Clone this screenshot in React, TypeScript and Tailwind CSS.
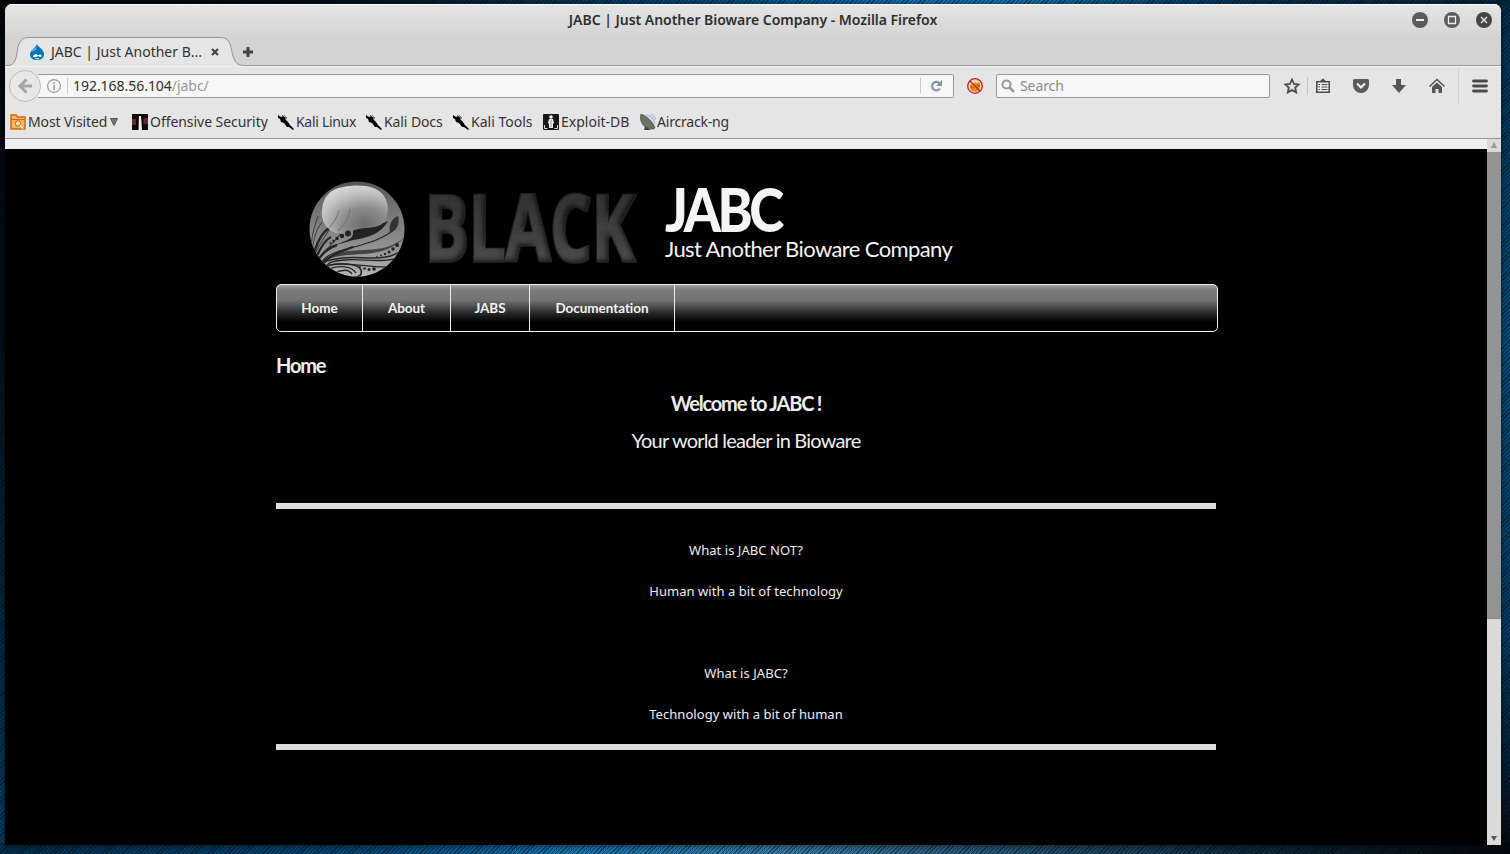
import React from "react";

function Kali() {
  return (
    <svg width="16" height="16" viewBox="0 0 16 16" className="shrink-0">
      <path d="M0 1l3 2 2-1 3 2-1 1 3 3 2 3 4 4-1 1-4-3-2 0-3-4-3-1-1-3-2-1z" fill="#000" />
      <path d="M4 1l5 4M6 1l3 3" stroke="#555" strokeWidth=".7" />
    </svg>
  );
}

function Orb() {
  return (
    <svg width="98" height="98" viewBox="0 0 98 98" className="block">
      <defs>
        <linearGradient id="ball" x1="0" y1="0" x2="0" y2="1">
          <stop offset="0" stopColor="#555" />
          <stop offset=".3" stopColor="#757575" />
          <stop offset=".65" stopColor="#8d8d8d" />
          <stop offset="1" stopColor="#b5b5b5" />
        </linearGradient>
        <radialGradient id="gloss" cx=".65" cy=".8" r=".85">
          <stop offset="0" stopColor="#6c6c6c" />
          <stop offset=".4" stopColor="#8c8c8c" />
          <stop offset=".75" stopColor="#c0c0c0" />
          <stop offset="1" stopColor="#d8d8d8" />
        </radialGradient>
        <clipPath id="disc"><circle cx="48" cy="48" r="47.500" /></clipPath>
      </defs>
      <circle cx="48" cy="48" r="47.500" fill="url(#ball)" />
      <g clipPath="url(#disc)" fill="none" stroke="#242424">
        <path d="M44 47C56 48 69 45 79 40C72 53 58 57 44 59L24 65C36 60 44 58 44 53Z" fill="#222" stroke="none" />
        <path d="M81 52c-2-8 2-15 8-17 2 7-1 15-8 17z" fill="#333" stroke="none" />
        <path d="M82 51C68 61 48 65 34 69S17 76 13 80" strokeWidth="1.200" />
        <path d="M96 56C76 74 50 66 30 72S14 79 11 83C25 73 40 74 55 73S85 68 96 56Z" fill="#444" stroke="none" />
        <path d="M94 68C78 83 52 74 33 77S18 80 13 84" strokeWidth="1.500" />
        <path d="M90 76C75 83 52 77 35 79S21 82 16 86" strokeWidth="1.300" />
        <path d="M82 85C68 89 44 80 20 84" strokeWidth="1.200" />
        <path d="M16 86C30 80 50 83 52 89S48 96 44 97" strokeWidth="1.600" />
        <path d="M20 88C30 84 43 85 47 92M26 92c8-4 14-3 17 1" strokeWidth="1.300" />
        <path d="M2 68C2 54 6 44 9 35M3 73C4 57 8 47 13 41M5 77C8 63 22 51 29 30M9 79C16 66 37 57 41 28" strokeWidth="1.100" stroke="#444" />
        <path d="M4 76C8 60 14 51 20 47M6 79C12 65 17 58 22 56M8 81C14 70 22 66 28 64" strokeWidth="2.400" />
        <path d="M12 84C20 74 31 71 44 66" strokeWidth="2.200" />
      </g>
      <path d="M34 6C50 3 67 4 75 15C81 24 80 37 73 43C66 48 54 46 46 49C38 53 28 55 21 49C15 44 12 37 13 29C14 16 21 8 34 6Z" fill="url(#gloss)" />
      <g fill="none" stroke="#707070" strokeWidth="1"><path d="M30 29C28 37 24 42 20 47M41 28C40 38 34 45 29 50" /></g>
      <g fill="#222">
        <circle cx="39" cy="52.500" r="3" /><circle cx="33" cy="55" r="2.200" /><circle cx="28" cy="57.500" r="1.700" /><circle cx="24.500" cy="60" r="1.300" /><circle cx="21.500" cy="62" r="1" />
        <circle cx="88" cy="64" r="2" /><circle cx="84" cy="68" r="1.700" /><circle cx="80" cy="71" r="1.500" /><circle cx="76" cy="73" r="1.200" /><circle cx="72" cy="74.500" r="1" /><circle cx="68" cy="75.500" r=".7" />
        <circle cx="65" cy="88" r="1.800" /><circle cx="60" cy="88.500" r="1.500" /><circle cx="55.500" cy="87.500" r="1.300" /><circle cx="51" cy="86" r="1" />
      </g>
    </svg>
  );
}

function TitleBar() {
  return (
    <div className="relative flex h-[33px] shrink-0 justify-center border-t border-white pt-[5px]">
      <span className="text-[14px] font-semibold leading-5 tracking-[-0.03px] text-[#2e2e2e]">
        JABC | Just Another Bioware Company - Mozilla Firefox
      </span>
      <div className="absolute right-[9px] top-[7px] flex gap-4">
        <svg width="16" height="16"><circle cx="8" cy="8" r="8" fill="#5b5b5b" /><path d="M4 8h8" stroke="#eee" strokeWidth="2" /></svg>
        <svg width="16" height="16"><circle cx="8" cy="8" r="8" fill="#5b5b5b" /><path d="M4.500 4.500h7v7h-7z" fill="none" stroke="#eee" strokeWidth="1.300" /></svg>
        <svg width="16" height="16"><circle cx="8" cy="8" r="8" fill="#454545" /><path d="M5 5l6 6M11 5l-6 6" stroke="#eee" strokeWidth="1.300" /></svg>
      </div>
    </div>
  );
}

function TabStrip() {
  return (
    <div className="flex h-[29px] shrink-0">
      <div className="relative h-[29px] w-[238px]">
        <svg width="238" height="29" className="absolute left-0 top-0">
          <path d="M0 28.500H3C13 28.500 11 14 14 7C16 2 19 .5 24 .5H214C220 .5 223 2 225 7C228 15 227 28.500 238 28.500V29H0Z" fill="#e5e5e5" />
          <path d="M0 28.500H3C13 28.500 11 14 14 7C16 2 19 .5 24 .5H214C220 .5 223 2 225 7C228 15 227 28.500 238 28.500" fill="none" stroke="#8d959c" />
        </svg>
        <div className="relative flex h-[29px] items-center pl-[24px]">
          <svg width="16" height="16" viewBox="0 0 16 16" className="shrink-0">
            <path d="M8 0C8.500 3 15 5 15 10.500C15 14 12 16 8 16S1 14 1 10.500C1 6 6 5 8 0Z" fill="#0074ba" />
            <path d="M4 12c1.500-2.500 4-2 5-.5 1.500-1.500 3.500-1.500 3.500.5 0 1.500-2 1-3.500 0-2 1.500-5 2-5 0z" fill="#fff" />
            <path d="M6.500 14.500q1.500.8 3.500 0" stroke="#fff" fill="none" />
            <path d="M7.500 2C6 5 3 6 2.500 8 5 7 8 6 7.500 2z" fill="#63b5e5" />
          </svg>
          <span className="ml-[6px] w-[152px] whitespace-pre text-[14px] leading-5 text-[#333]">JABC | Just Another B...</span>
          <svg width="10" height="10" className="ml-[7px]"><path d="M2 2l6 6M8 2L2 8" stroke="#444" strokeWidth="2.200" /></svg>
        </div>
      </div>
      <div className="flex h-[29px] flex-1 border-b border-[#999]">
        <svg width="12" height="12" className="mt-[10px]"><path d="M3.500 0h3v3.500H10v3H6.500V10h-3V6.500H0v-3h3.500z" fill="#444" /></svg>
      </div>
    </div>
  );
}

function NavBar() {
  return (
    <div className="flex h-[39px] shrink-0 items-center border-t border-[#f1f1f1]">
      <div className="relative ml-[4px] h-8 w-8 shrink-0 rounded-full border border-[#bdbdbd] bg-[#e8e8e8]">
        <svg width="30" height="30"><path d="M22 15H11M16.500 8.500L10 15l6.500 6.500" fill="none" stroke="#a5a5a5" strokeWidth="3" /></svg>
      </div>
      <div className="-ml-[3px] flex h-[24px] w-[916px] shrink-0 items-center rounded-r-[2px] border border-l-0 border-[#999] bg-[#f7f7f7]">
        <svg width="14" height="14" className="ml-[9px] shrink-0"><circle cx="7" cy="7" r="6.400" fill="none" stroke="#999" strokeWidth="1.100" /><path d="M7 6v5M7 3.200v1.800" stroke="#999" strokeWidth="1.600" /></svg>
        <div className="ml-[6px] h-4 w-px bg-[#ccc]" />
        <span className="ml-[5px] flex-1 whitespace-pre text-[14px] leading-5 tracking-[-0.04px] text-[#2e2e2e]">192.168.56.104<span className="text-[#999]">/jabc/</span></span>
        <div className="h-4 w-px bg-[#ccc]" />
        <svg width="14" height="14" className="mx-[9px]"><path d="M10 9.500A4.300 4.300 0 1 1 9.500 4.200" fill="none" stroke="#8496a2" strokeWidth="2.200" /><path d="M12 1v6H6z" fill="#8496a2" /></svg>
      </div>
      <svg width="16" height="16" className="ml-[13px] shrink-0"><circle cx="8" cy="8" r="7" fill="#dfd6cd" /><path d="M3 7l2-1 1 1 2-3 2 1 3-1v5l-1 3-3 2-4-1-2-3z" fill="#e78b12" /><path d="M4 9l2 1M10 7l3 1" stroke="#84501a" /><circle cx="8" cy="8" r="7.300" fill="none" stroke="#ce171b" strokeWidth="1.300" /><path d="M3 3l10 10" stroke="#ce171b" strokeWidth="1.300" /></svg>
      <div className="ml-[13px] flex h-[24px] w-[274px] shrink-0 items-center rounded-[2px] border border-[#999] bg-[#f7f7f7]">
        <svg width="14" height="14" className="ml-[4px]"><circle cx="5.500" cy="5.500" r="4" fill="none" stroke="#999" strokeWidth="2" /><path d="M8.500 8.500l4.500 4.500" stroke="#999" strokeWidth="2.500" /></svg>
        <span className="ml-[5px] text-[14px] leading-5 tracking-[-0.1px] text-[#8b8b8b]">Search</span>
      </div>
      <svg width="16" height="16" className="ml-[14px] shrink-0"><path d="M8 1.500l2 4.400 4.700.5-3.500 3.200 1 4.800L8 12l-4.200 2.400 1-4.800L1.300 6.400 6 5.900z" fill="none" stroke="#4b4b4b" strokeWidth="1.800" /></svg>
      <div className="ml-[7px] h-[18px] w-px bg-[#c4c4c4]" />
      <svg width="16" height="16" className="ml-[7px] shrink-0"><path d="M1.800 3.800h12.400v10.400H1.800z" fill="#eee" stroke="#4b4b4b" strokeWidth="1.600" /><path d="M4.500 3.500L8 .5l3.500 3z" fill="#4b4b4b" /><path d="M3.500 6.500H5M6.500 6.500h6M3.500 9H5M6.500 9h6M3.500 11.500H5M6.500 11.500h6" stroke="#4b4b4b" strokeWidth="1.200" /></svg>
      <svg width="18" height="16" className="ml-[21px] shrink-0"><path d="M2.500 1h13a1.500 1.500 0 0 1 1.500 1.500V7a8 8 0 0 1-16 0V2.500A1.500 1.500 0 0 1 2.500 1z" fill="#5a5a5a" /><path d="M5 5.500l4 4 4-4" fill="none" stroke="#eee" strokeWidth="2.200" /></svg>
      <svg width="16" height="16" className="ml-[21px] shrink-0"><path d="M5 1h5v6h5l-7 8-7-8h4z" fill="#555" /></svg>
      <svg width="16" height="16" className="ml-[22px] shrink-0"><path d="M.5 8.500L8 1.500l7.500 7" fill="none" stroke="#555" strokeWidth="1.500" /><path d="M3 9L8 4.500 13 9V15H9.500v-4h-3v4H3z" fill="#555" /></svg>
      <div className="ml-[13px] h-[34px] w-px bg-[#d1d1d1]" />
      <svg width="16" height="14" className="ml-[13px] shrink-0"><path d="M1.500 2h13M1.500 7h13M1.500 12h13" stroke="#4b4b4b" strokeWidth="2.800" strokeLinecap="round" /></svg>
    </div>
  );
}

function Bookmarks() {
  return (
    <div className="flex h-[34px] shrink-0 items-center border-b border-[#999] pl-[5px] pt-px text-[14px] leading-5 text-[#333]">
      <svg width="16" height="16" className="shrink-0"><path d="M1 1h5l1.500 2H15v12H1z" fill="#f3b36a" stroke="#d9680d" strokeWidth="1.500" /><path d="M1 5.500h14" stroke="#d9680d" /><circle cx="8" cy="9.500" r="2.700" fill="#ffe1b2" stroke="#c9630f" /><path d="M10 11.500l3 3" stroke="#fff" strokeWidth="1.300" /></svg>
      <span className="ml-[2px] w-[80px] whitespace-pre tracking-[-0.1px]">Most Visited</span>
      <svg width="9" height="8" className="ml-[2px]"><path d="M.5 .5h7L4 7.500z" fill="#777" stroke="#555" /></svg>
      <svg width="16" height="16" className="ml-[13px] shrink-0"><path d="M0 0h16v16H0z" fill="#160708" /><path d="M0 5h4v6H0zM11 4h5v6h-5z" fill="#592c2c" /><path d="M7 2l2 0 1 14H6.500z" fill="#eee" /><path d="M5 5v11M11 3v13" stroke="#000" /></svg>
      <span className="ml-[2px] w-[119px] whitespace-pre tracking-[-0.05px]">Offensive Security</span>
      <div className="ml-[9px] flex"><Kali /></div><span className="ml-[2px] w-[60px] whitespace-pre tracking-[-0.3px]">Kali Linux</span>
      <div className="ml-[10px] flex"><Kali /></div><span className="ml-[2px] w-[59px] whitespace-pre tracking-[-0.1px]">Kali Docs</span>
      <div className="ml-[10px] flex"><Kali /></div><span className="ml-[2px] w-[63px] whitespace-pre">Kali Tools</span>
      <svg width="16" height="16" className="ml-[9px] shrink-0"><rect width="16" height="16" rx="1" fill="#171717" /><circle cx="8" cy="3" r="1.800" fill="#eee" /><path d="M6 5h4l1 4-1 1v4H6v-4L5 9z" fill="#eee" /><path d="M8 6v7" stroke="#999" /><path d="M1.500 11v3.500h3M14.500 11v3.500h-3" stroke="#ddd" fill="none" /></svg>
      <span className="ml-[2px] w-[70px] whitespace-pre">Exploit-DB</span>
      <svg width="16" height="16" className="ml-[9px] shrink-0"><path d="M3 1q8 0 12 12V4L10 0z" fill="#c9d9f0" /><path d="M1 0C-1 7 3 15 13 15L15 14C13 8 7 2 1 0z" fill="#6d7268" stroke="#42463e" strokeWidth=".7" /><path d="M7 1q6 2 8 9M11 0q4 2 5 6" fill="none" stroke="#a8c3ed" strokeWidth="1.200" /><path d="M5 12l-1 4h7z" fill="#444" /></svg>
      <span className="ml-[1px] whitespace-pre tracking-[-0.2px]">Aircrack-ng</span>
    </div>
  );
}

function Header() {
  return (
    <header className="flex h-[135px] pl-[33px]">
      <div className="mt-[32px] w-[98px]"><Orb /></div>
      <svg width="220" height="90" className="ml-[16px] mt-[32px] overflow-visible">
        <defs>
          <linearGradient id="metal" x1="0" y1="0" x2="0" y2="1"><stop offset="0" stopColor="#292929" /><stop offset=".75" stopColor="#494949" /><stop offset="1" stopColor="#353535" /></linearGradient>
          <filter id="bevel" x="-5%" y="-5%" width="110%" height="110%">
            <feMorphology in="SourceAlpha" operator="dilate" radius="1" result="fat" />
            <feFlood floodColor="#1c1c1c" />
            <feComposite in2="fat" operator="in" result="rim" />
            <feGaussianBlur in="SourceAlpha" stdDeviation="2.2" result="soft" />
            <feOffset in="soft" dx="-3" dy="-3" result="shift" />
            <feComposite in="SourceAlpha" in2="shift" operator="out" result="edge" />
            <feFlood floodColor="#000" floodOpacity=".75" />
            <feComposite in2="edge" operator="in" result="shade" />
            <feMerge><feMergeNode in="rim" /><feMergeNode in="SourceGraphic" /><feMergeNode in="shade" /></feMerge>
          </filter>
        </defs>
        <text x="2" y="80" textLength="210" lengthAdjust="spacingAndGlyphs" fontFamily="Open Sans, sans-serif" fontWeight="700" fontSize="92" fill="url(#metal)" stroke="url(#metal)" strokeWidth="2" filter="url(#bevel)">BLACK</text>
      </svg>
      <div className="ml-[22px] mt-[32px] text-[#f5f5f5]">
        <h1 className="w-[140px] origin-left scale-x-[0.87] whitespace-pre font-[Lato,sans-serif] text-[61px] font-black leading-[56px] tracking-[-4px]">JABC</h1>
        <p className="mt-px whitespace-pre text-[22px] leading-[22px] tracking-[-0.6px]">Just Another Bioware Company</p>
      </div>
    </header>
  );
}

function Menu() {
  return (
    <nav className="flex h-[48px] w-[942px] overflow-hidden rounded-[5px] border border-[#eee] bg-[linear-gradient(#a0a0a0_0px,#7b7b7b_5px,#747474_15px,#333_26px,#000_37px)] text-[13.500px] font-bold leading-[46px] tracking-[-0.05px] text-[#f3f3f3]">
      <a className="w-[86px] border-r border-[#eee] text-center">Home</a>
      <a className="w-[88px] border-r border-[#eee] text-center">About</a>
      <a className="w-[79px] border-r border-[#eee] text-center">JABS</a>
      <a className="w-[145px] border-r border-[#eee] text-center">Documentation</a>
    </nav>
  );
}

function Page() {
  return (
    <div className="h-[696px] flex-1 bg-black font-['Lato','Noto_Sans',sans-serif] text-[#eee]">
      <div className="ml-[271px] w-[942px]">
        <Header />
        <Menu />
        <h2 className="mt-[18px] text-[20px] font-bold leading-[30px] tracking-[-1.2px]">Home</h2>
        <div className="w-[940px] text-center">
          <h2 className="mt-[8px] text-[20px] font-bold leading-[30px] tracking-[-1.2px]">Welcome to JABC !</h2>
          <p className="mt-[7px] text-[20px] leading-[30px] tracking-[-0.8px]">Your world leader in Bioware</p>
          <div className="mt-[48px] h-[6px] bg-[#ddd]" />
          <div className="pt-[31px] font-['Noto_Sans',sans-serif] text-[13px] leading-[20px] tracking-[0.05px]">
            <p>What is JABC NOT?</p>
            <p className="mt-[21px]">Human with a bit of technology</p>
            <p className="mt-[62px]">What is JABC?</p>
            <p className="mt-[21px]">Technology with a bit of human</p>
          </div>
          <div className="mt-[20px] h-[6px] bg-[#ddd]" />
        </div>
      </div>
    </div>
  );
}

export default function App() {
  return (
    <div className="h-[854px] w-[1510px] overflow-hidden pl-[5px] pt-[4px] font-['Noto_Sans','Open_Sans',sans-serif] [background:repeating-linear-gradient(135deg,#00000066_0px,#00000066_1px,transparent_1px,transparent_3px),linear-gradient(90deg,#020508,#03101c_22%,#075083_48%,#0f72b5_60%,#1673ad_68%,#05365d_82%,#03283f)_top/100%_5px_no-repeat,linear-gradient(90deg,#04304f,#064878_25%,#1773ad_38%,#397ba5_52%,#28587a_65%,#0c2536_85%,#05090d)_bottom/100%_12px_no-repeat,linear-gradient(#02304f,#074a78_40%,#053a60_75%,#060d14)_right/12px_100%_no-repeat,linear-gradient(#03080d,#04121e_40%,#064069)]">
      <div className="flex h-[841px] w-[1496px] flex-col overflow-hidden rounded-t-[7px] bg-[#e5e5e5] shadow-[0_1px_6px_0px_#0009]">
        <div className="flex shrink-0 flex-col bg-[linear-gradient(#e5e5e5,#d3d3d3_36px,#d3d3d3)]">
          <TitleBar />
          <TabStrip />
        </div>
        <NavBar />
        <Bookmarks />
        <div className="flex flex-1">
          <div className="flex flex-1 flex-col">
            <div className="h-[10px] shrink-0 bg-[#eee]" />
            <Page />
          </div>
          <div className="flex w-[14px] flex-col bg-[#dadada]">
            <div className="flex h-[13px] items-center justify-center"><svg width="8" height="7"><path d="M4 0l3 6H1z" fill="#999" /></svg></div>
            <div className="h-[467px] border-b border-[#888] bg-[#939393]" />
            <div className="flex flex-1 items-end justify-center pb-[3px]"><svg width="8" height="7"><path d="M1 1h6L4 6z" fill="#555" /></svg></div>
          </div>
        </div>
      </div>
    </div>
  );
}
